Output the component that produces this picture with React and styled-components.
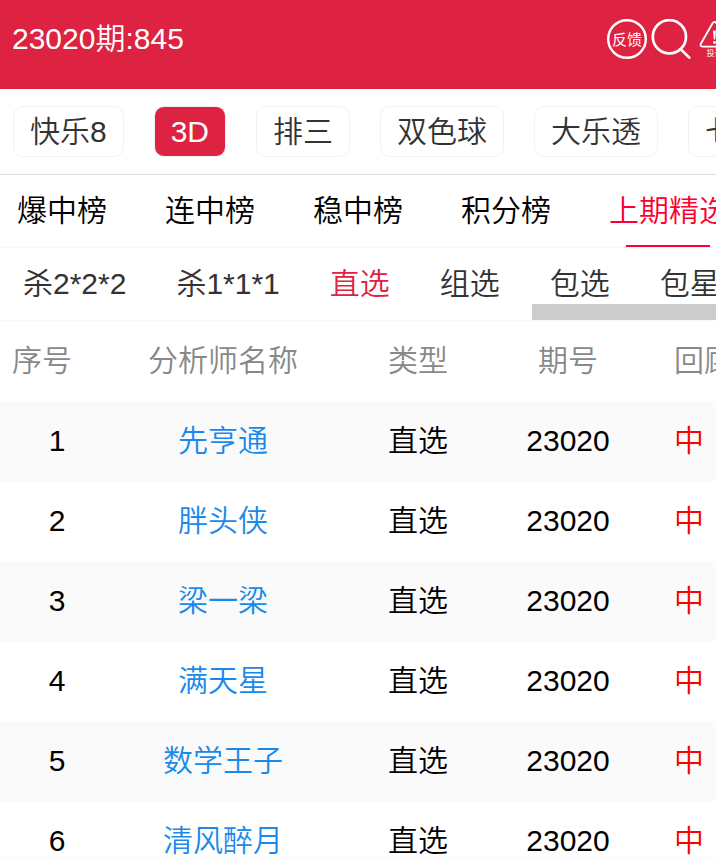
import React, { useState } from 'react'
import styled, { createGlobalStyle, ThemeProvider } from 'styled-components'

const theme = {
  colors: {
    primary: '#dd2341',
    active: '#fb0030',
    link: '#1989ea',
    hit: '#ff0000',
    text: '#333333',
    gray: '#888888',
    border: '#dddddd',
    lightBorder: '#f8f8f8',
    stripe: '#fafafa',
  },
}

const games = ['快乐8', '3D', '排三', '双色球', '大乐透', '七星彩']
const ranks = ['爆中榜', '连中榜', '稳中榜', '积分榜', '上期精选']
const plays = ['杀2*2*2', '杀1*1*1', '直选', '组选', '包选', '包星']
const analysts = ['先亨通', '胖头侠', '梁一梁', '满天星', '数学王子', '清风醉月']

const FeedbackIcon = () => (
  <svg width="40" height="40" viewBox="0 0 40 40" aria-hidden="true">
    <circle cx="20" cy="20" r="18.8" fill="none" stroke="#fff" strokeWidth="2.4" />
    <text x="20" y="25.5" textAnchor="middle" fontSize="15" fontWeight="400" fill="#fff">反馈</text>
  </svg>
)

const SearchIcon = () => (
  <svg width="40" height="40" viewBox="0 0 40 40" fill="none" stroke="#fff" strokeWidth="2.7" aria-hidden="true">
    <circle cx="18.4" cy="17.7" r="16.6" />
    <path d="M29.5 30 L38.3 38.6" strokeLinecap="round" />
  </svg>
)

const ComplaintIcon = () => (
  <svg width="40" height="40" viewBox="0 0 40 40" aria-hidden="true">
    <path
      d="M17.6 4.2 Q19.5 1.4 21.4 4.2 L33.3 25 Q34.2 27.4 31.5 27.6 H7.5 Q4.8 27.4 5.7 25 Z"
      fill="none"
      stroke="#fff"
      strokeWidth="1.8"
    />
    <path d="M18 11.5 H21 L20.2 20.5 H18.8 Z" fill="#fff" />
    <circle cx="19.5" cy="23.5" r="1.4" fill="#fff" />
    <text x="19.5" y="37" textAnchor="middle" fontSize="8" fontWeight="400" fill="#fff">投诉</text>
  </svg>
)

const App = () => {
  const [game, setGame] = useState('3D')
  const [rank, setRank] = useState('上期精选')
  const [play, setPlay] = useState('直选')

  return (
    <ThemeProvider theme={theme}>
      <GlobalStyle />
      <Page>
        {/* header */}
        <Header>
          <Title>23020期:845</Title>
          <Actions>
            <IconButton aria-label="反馈"><FeedbackIcon /></IconButton>
            <IconButton aria-label="搜索"><SearchIcon /></IconButton>
            <IconButton aria-label="投诉"><ComplaintIcon /></IconButton>
          </Actions>
        </Header>

        {/* lottery games */}
        <GameBar>
          {games.map((name) => (
            <GameButton key={name} $active={name === game} onClick={() => setGame(name)}>
              {name}
            </GameButton>
          ))}
        </GameBar>

        {/* rank tabs */}
        <RankBar>
          {ranks.map((name) => (
            <RankTab key={name} $active={name === rank} onClick={() => setRank(name)}>
              {name}
            </RankTab>
          ))}
        </RankBar>

        {/* play types */}
        <PlayBar>
          {plays.map((name) => (
            <PlayTab key={name} $active={name === play} onClick={() => setPlay(name)}>
              {name}
            </PlayTab>
          ))}
          <ScrollThumb />
        </PlayBar>

        <Content>
          <Table>
            <colgroup>
              <col className="no" />
              <col className="name" />
              <col className="type" />
              <col className="issue" />
              <col />
            </colgroup>
            <thead>
              <tr>
                <th className="no">序号</th>
                <th>分析师名称</th>
                <th>类型</th>
                <th>期号</th>
                <th className="review">回顾</th>
              </tr>
            </thead>
            <tbody>
              {analysts.map((name, i) => (
                <tr key={name}>
                  <td>{i + 1}</td>
                  <td><a href="#analyst">{name}</a></td>
                  <td>直选</td>
                  <td>23020</td>
                  <td className="review hit">中</td>
                </tr>
              ))}
            </tbody>
          </Table>
        </Content>
        <Footer />
      </Page>
    </ThemeProvider>
  )
}

const GlobalStyle = createGlobalStyle`
  * {
    box-sizing: border-box;
  }
  body {
    margin: 0;
    background: #fff;
  }
  body, button {
    font-family: "Liberation Sans", "Noto Sans CJK SC", sans-serif;
    font-size: 30px;
    font-weight: 350;
    line-height: 40px;
  }
  button {
    padding: 0;
    border: none;
    background: none;
    white-space: nowrap;
    cursor: pointer;
  }
`

const Page = styled.div`
  display: flex;
  flex-direction: column;
  height: 100vh;
  overflow: hidden;
`

const Header = styled.header`
  display: flex;
  flex: none;
  justify-content: space-between;
  height: 89px;
  padding: 19px 0 0 12px;
  color: #fff;
  background: ${props=>props.theme.colors.primary};
`

const Title = styled.h1`
  margin: 0;
  font-size: 30px;
  font-weight: 350;
`

const Actions = styled.div`
  display: flex;
  flex: none;
  gap: 4px;
  width: 109px;
`

const IconButton = styled.button`
  flex: none;
  height: 40px;
  svg {
    display: block;
  }
`

const Bar = styled.nav`
  position: relative;
  display: flex;
  flex: none;
  overflow: hidden;
  border-bottom: 1px solid ${props=>props.theme.colors.lightBorder};
`

const GameBar = styled(Bar)`
  gap: 30px;
  padding: 17px 13px;
  border-bottom-color: ${props=>props.theme.colors.border};
`

const GameButton = styled.button`
  flex: none;
  height: 51px;
  padding: 0 16px;
  border: 1px solid #f2f2f2;
  border-radius: 10px;
  color: ${props=>props.$active ? '#fff' : props.theme.colors.text};
  background: ${props=>props.$active ? props.theme.colors.primary : '#fff'};
`

const RankBar = styled(Bar)`
  gap: 58px;
  padding: 0 17px;
`

const RankTab = styled.button`
  position: relative;
  flex: none;
  height: 72px;
  color: ${props=>props.$active ? props.theme.colors.active : '#000'};
  &::after {
    content: "";
    display: ${props=>props.$active ? 'block' : 'none'};
    position: absolute;
    left: 14%;
    bottom: 0;
    width: 70%;
    height: 2px;
    background: ${props=>props.theme.colors.active};
  }
`

const PlayBar = styled(Bar)`
  gap: 50px;
  padding: 0 23px;
`

const PlayTab = styled.button`
  flex: none;
  height: 72px;
  color: ${props=>props.$active ? props.theme.colors.primary : props.theme.colors.text};
`

const ScrollThumb = styled.div`
  position: absolute;
  right: 0;
  bottom: 0;
  width: 184px;
  height: 16px;
  background: #cccccc;
`

const Content = styled.main`
  flex: 1;
  min-height: 0;
  overflow: hidden;
`

const Table = styled.table`
  width: 100%;
  table-layout: fixed;
  border-collapse: collapse;
  col.no{
    width: 114px;
  }
  col.name{
    width: 218px;
  }
  col.type{
    width: 172px;
  }
  col.issue{
    width: 128px;
  }
  th, td{
    height: 80px;
    padding: 0;
    font-weight: 350;
    text-align: center;
    white-space: nowrap;
  }
  th{
    color: ${props=>props.theme.colors.gray};
  }
  th.no{
    padding-left: 12px;
    text-align: left;
  }
  .review{
    padding-left: 42px;
    text-align: left;
  }
  .hit{
    color: ${props=>props.theme.colors.hit};
  }
  a{
    color: ${props=>props.theme.colors.link};
    text-decoration: none;
  }
  tbody tr:nth-child(odd){
    background: ${props=>props.theme.colors.stripe};
  }
`

const Footer = styled.footer`
  flex: none;
  height: 10px;
  border-top: 1px solid ${props=>props.theme.colors.lightBorder};
  background: #fff;
`

export default App
